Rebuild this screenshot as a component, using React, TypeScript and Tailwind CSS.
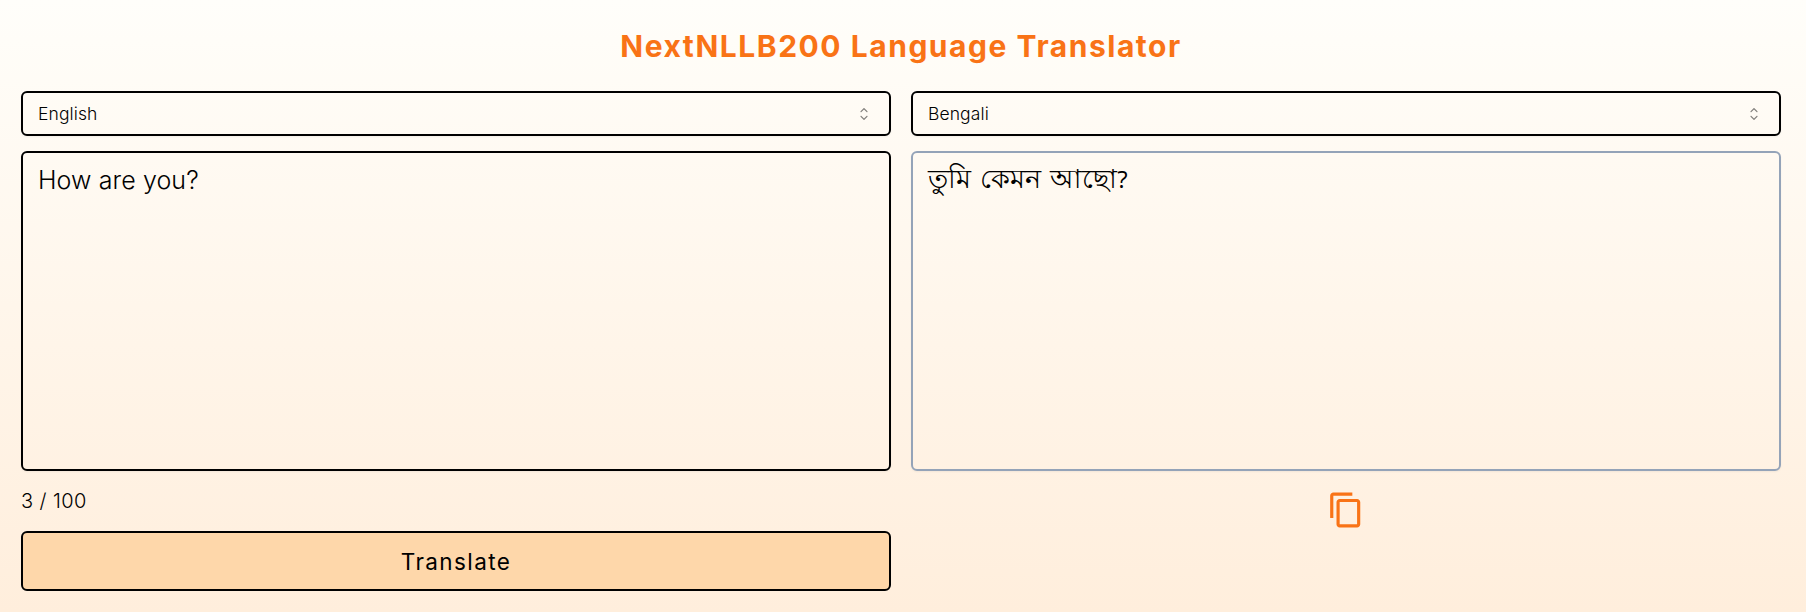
import { MdContentCopy } from "react-icons/md";

function LanguageSelect({ value }: { value: string }) {
  return (
    <button className="flex h-[45px] w-full items-center justify-between rounded-md border-2 border-black pt-px pr-[15px] pl-[15px] text-left text-[17.5px] font-light tracking-[0.1px] shadow-xs">
      <span>{value}</span>
      <svg viewBox="0 0 15 15" className="size-5 text-black/50" fill="currentColor">
        <path
          fillRule="evenodd"
          clipRule="evenodd"
          d="M4.93179 5.43179C4.75605 5.60753 4.75605 5.89245 4.93179 6.06819C5.10753 6.24392 5.39245 6.24392 5.56819 6.06819L7.49999 4.13638L9.43179 6.06819C9.60753 6.24392 9.89245 6.24392 10.0682 6.06819C10.2439 5.89245 10.2439 5.60753 10.0682 5.43179L7.81819 3.18179C7.73379 3.0974 7.61933 3.04999 7.49999 3.04999C7.38064 3.04999 7.26618 3.0974 7.18179 3.18179L4.93179 5.43179ZM10.0682 9.56819C10.2439 9.39245 10.2439 9.10753 10.0682 8.93179C9.89245 8.75606 9.60753 8.75606 9.43179 8.93179L7.49999 10.8636L5.56819 8.93179C5.39245 8.75606 5.10753 8.75606 4.93179 8.93179C4.75605 9.10753 4.75605 9.39245 4.93179 9.56819L7.18179 11.8182C7.35753 11.9939 7.64245 11.9939 7.81819 11.8182L10.0682 9.56819Z"
        />
      </svg>
    </button>
  );
}

export default function App() {
  return (
    <main className="h-[612px] overflow-hidden bg-linear-to-b from-[#fffefa] to-[#ffeedc] pr-[25px] pl-[21px] font-['Inter',sans-serif] text-black">
      <h1 className="pt-[26px] text-center text-[30px] leading-[40px] font-bold tracking-[1.53px] text-[#f97316]">
        NextNLLB200 Language Translator
      </h1>
      <div className="mt-[25px] grid grid-cols-2 gap-5">
        <section className="flex flex-col">
          <LanguageSelect value="English" />
          <div className="mt-[15px] h-80 rounded-md border-2 border-black px-[15px] py-[10px] text-[25px] leading-[35px] font-light tracking-[0.1px] shadow-xs">
            How are you?
          </div>
          <p className="mt-[15px] text-xl leading-[30px] font-light tracking-[0.4px]">3 / 100</p>
          <button className="mt-[15px] h-[60px] rounded-md border-2 border-black bg-[#fed7aa] pt-0.5 text-[22.5px] tracking-[1.4px]">
            Translate
          </button>
        </section>
        <section className="flex flex-col">
          <LanguageSelect value="Bengali" />
          <div className="mt-[15px] h-80 rounded-md border-2 border-[#94a3b8] px-[15px] py-[9px] text-[25px] leading-[35px] font-light shadow-xs">
            <span className="text-[27.3px] leading-[30px] [word-spacing:1.5px]">তুমি কেমন আছো</span>
            <span className="font-['Open_Sans',sans-serif] text-2xl leading-[30px] font-normal">?</span>
          </div>
          <MdContentCopy className="mt-5 size-[38px] self-center text-[#f97316]" />
        </section>
      </div>
    </main>
  );
}
